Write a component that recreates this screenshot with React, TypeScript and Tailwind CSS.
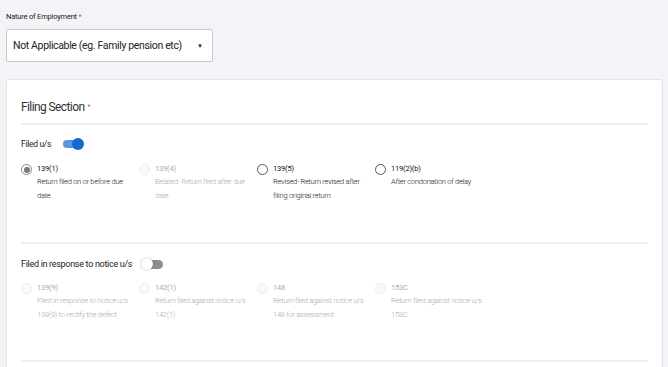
import React from "react";

type Opt = { code: string; desc: string[]; state: "checked" | "open" | "disabled" };

const filedOptions: Opt[] = [
  { code: "139(1)", desc: ["Return filed on or before due", "date"], state: "checked" },
  { code: "139(4)", desc: ["Belated- Return filed after due", "date"], state: "disabled" },
  { code: "139(5)", desc: ["Revised- Return revised after", "filing original return"], state: "open" },
  { code: "119(2)(b)", desc: ["After condonation of delay"], state: "open" },
];

const noticeOptions: Opt[] = [
  { code: "139(9)", desc: ["Filed in response to notice u/s", "139(9) to rectify the defect"], state: "disabled" },
  { code: "142(1)", desc: ["Return filed against notice u/s", "142(1)"], state: "disabled" },
  { code: "148", desc: ["Return filed against notice u/s", "148 for assessment"], state: "disabled" },
  { code: "153C", desc: ["Return filed against notice u/s", "153C"], state: "disabled" },
];

function Radio({ state }: { state: Opt["state"] }) {
  if (state === "checked") {
    return (
      <span className="mt-[1px] flex h-[11px] w-[11px] shrink-0 items-center justify-center rounded-full border border-[#8a8a8a] bg-white">
        <span className="h-[6px] w-[6px] rounded-full bg-[#7a7a7a]" />
      </span>
    );
  }
  if (state === "open") {
    return <span className="mt-[1px] h-[11px] w-[11px] shrink-0 rounded-full border border-[#555] bg-white" />;
  }
  return <span className="mt-[1px] h-[11px] w-[11px] shrink-0 rounded-full border border-[#ececec] bg-[#fafafa]" />;
}

function OptionRow({ options }: { options: Opt[] }) {
  return (
    <div className="grid grid-cols-[118px_118px_118px_1fr]">
      {options.map((o) => {
        const muted = o.state === "disabled";
        return (
          <div key={o.code} className="flex gap-[5px]">
            <Radio state={o.state} />
            <div className={muted ? "text-[#ababab]" : "text-[#111]"}>
              <div className="text-[7.5px] leading-[12px] tracking-[-0.2px]">{o.code}</div>
              {o.desc.map((d) => (
                <div key={d} className="whitespace-nowrap text-[7.5px] font-light leading-[14px] tracking-[-0.25px]">
                  {d}
                </div>
              ))}
            </div>
          </div>
        );
      })}
    </div>
  );
}

function Toggle({ on }: { on: boolean }) {
  return on ? (
    <span className="relative flex h-[12px] w-[21px] items-center">
      <span className="h-[8px] w-[19px] rounded-full bg-[#5c93de]" />
      <span className="absolute right-0 h-[12px] w-[12px] rounded-full bg-[#1766d6]" />
    </span>
  ) : (
    <span className="relative flex h-[12px] w-[22px] items-center">
      <span className="ml-[3px] h-[9px] w-[19px] rounded-full bg-[#8d8d8d]" />
      <span className="absolute left-0 h-[12px] w-[12px] rounded-full bg-white shadow-[0_0_2px_rgba(0,0,0,0.35)]" />
    </span>
  );
}

export default function App() {
  return (
    <div className="h-screen overflow-hidden bg-[#f3f4f8] pl-[6px] pr-[5px] pt-[12px] font-[Roboto,sans-serif] text-[#222]">
      <div className="text-[7.5px] leading-[10px] tracking-[-0.2px]">
        Nature of Employment <span className="text-[#e0443c]">*</span>
      </div>

      <div className="mt-[7px] flex h-[33px] w-[207px] items-center justify-between rounded-[2px] border border-[#c9c9c9] bg-white pl-[6px] pr-[9px]">
        <span className="text-[10.5px] tracking-[-0.35px]">Not Applicable (eg. Family pension etc)</span>
        <span className="text-[6px]">▼</span>
      </div>

      <div className="mt-[17px] rounded-[3px] border border-[#e2e4ee] bg-white px-[14px] pt-[19px] pb-[20px]">
        <div className="flex items-center gap-[3px] pb-[8px] pr-[2px]">
          <span className="text-[12px] leading-[16px] tracking-[-0.6px] text-[#333]">Filing Section</span>
          <span className="text-[7px] text-[#e0443c]">*</span>
        </div>
        <div className="h-[2px] bg-[#eceef5]" />

        <div className="mt-[13px] flex items-center gap-[12px]">
          <span className="text-[8.5px] leading-[12px] tracking-[-0.3px]">Filed u/s</span>
          <Toggle on />
        </div>

        <div className="mt-[13px]">
          <OptionRow options={filedOptions} />
        </div>

        <div className="mt-[39px] h-[2px] bg-[#eceef5]" />

        <div className="mt-[14px] flex items-center gap-[9px]">
          <span className="text-[9px] leading-[12px] tracking-[-0.3px]">Filed in response to notice u/s</span>
          <Toggle on={false} />
        </div>

        <div className="mt-[12px]">
          <OptionRow options={noticeOptions} />
        </div>

        <div className="mt-[38px] h-[2px] bg-[#eceef5]" />
      </div>
    </div>
  );
}
